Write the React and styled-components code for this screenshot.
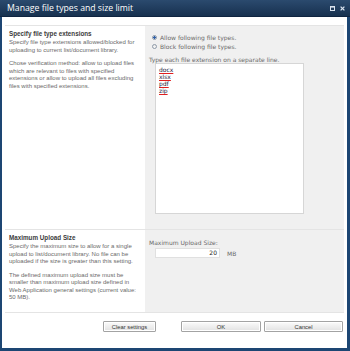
import React from 'react';
import styled, { createGlobalStyle } from 'styled-components';

const GlobalStyle = createGlobalStyle`
  html, body {
    margin: 0;
    padding: 0;
    background: #fff;
  }
`;

const Dialog = styled.div`
  width: 350px;
  height: 351px;
  box-sizing: border-box;
  display: flex;
  flex-direction: column;
  background: #1d4673;
  padding: 0 3px 3px 2px;
  font-family: "Liberation Sans", Arial, sans-serif;
`;

const TitleBar = styled.div`
  height: 17px;
  margin: 0 -3px 0 -2px;
  padding: 0 5px 0 7px;
  display: flex;
  align-items: center;
  background: linear-gradient(#2b4a6e, #17314f);
  border-bottom: 1px solid #0f2440;
  box-sizing: border-box;
`;

const Title = styled.div`
  flex: 1;
  color: #fff;
  font-family: "Open Sans", "Noto Sans", sans-serif;
  font-size: 8.7px;
`;

const TitleIcons = styled.div`
  display: flex;
  gap: 5px;
  align-items: center;
`;

const Body = styled.div`
  flex: 1;
  background: #fff;
  padding: 8px 3px 0 3px;
  display: flex;
  flex-direction: column;
`;

const Section = styled.div`
  display: grid;
  grid-template-columns: 140px 1fr;
  height: ${p => p.h}px;
  border-top: 1px solid #e4e4e4;
  border-bottom: ${p => (p.last ? '1px solid #e4e4e4' : 'none')};
`;

const Info = styled.div`
  padding: 4px 3px 0 4px;
`;

const InfoTitle = styled.div`
  font-size: 6.3px;
  font-weight: bold;
  color: #3b3b3b;
  line-height: 7px;
  margin-bottom: 2px;
`;

const InfoText = styled.p`
  margin: 0 0 6px 0;
  font-size: 6px;
  line-height: 7.5px;
  color: #6a6a6a;
`;

const Field = styled.div`
  background: #f0f0f0;
  padding: 7px 4px 0 4px;
  font-family: "DejaVu Sans", Verdana, sans-serif;
`;

const RadioRow = styled.label`
  display: flex;
  align-items: center;
  gap: 3px;
  padding-left: 3px;
  height: 9px;
  font-size: 6px;
  color: #6a6a6a;
`;

const Radio = styled.span`
  width: 5px;
  height: 5px;
  border-radius: 50%;
  box-sizing: border-box;
  border: 1px solid #8e9aa8;
  background: ${p => (p.on ? 'radial-gradient(circle, #2f5fa8 0 1.2px, #dfe7f2 1.4px)' : 'linear-gradient(#e8e8e8, #fafafa)')};
`;

const FieldLabel = styled.div`
  font-size: 6px;
  color: #6a6a6a;
  margin-top: ${p => p.mt || 0}px;
  line-height: 7px;
`;

const ListBox = styled.div`
  width: 149px;
  height: 151px;
  box-sizing: border-box;
  margin: 0 0 0 6px;
  background: #fff;
  border: 1px solid #d6d6d6;
  padding: 2px 3px;
  display: flex;
  flex-direction: column;
  align-items: flex-start;
`;

const Ext = styled.span`
  font-size: 6px;
  line-height: 7px;
  color: #1c1c3c;
  text-decoration: underline solid #e02020;
  text-decoration-thickness: 0.7px;
  text-underline-offset: 1px;
`;

const SizeRow = styled.div`
  display: flex;
  align-items: center;
  gap: 7px;
  margin: 2px 0 0 6px;
`;

const SizeInput = styled.div`
  width: 65px;
  height: 10px;
  box-sizing: border-box;
  background: #fff;
  border: 1px solid #e0e0e0;
  font-size: 6px;
  color: #222;
  text-align: right;
  padding-right: 2px;
  line-height: 8px;
`;

const Unit = styled.span`
  font-size: 6px;
  color: #6a6a6a;
`;

const ButtonBar = styled.div`
  display: flex;
  justify-content: flex-end;
  padding: 8px 1px 0 0;
`;

const Button = styled.button`
  width: ${p => p.w}px;
  height: 11px;
  margin-left: ${p => p.ml}px;
  padding: 0;
  box-sizing: border-box;
  border: 1px solid #a3a3a3;
  border-radius: 1px;
  background: linear-gradient(#fbfbfb, #e2e2e2);
  box-shadow: inset 0 0 0 1px #fff;
  font-family: "Liberation Sans", Arial, sans-serif;
  font-size: 5.8px;
  color: #333;
`;

function MaxIcon() {
  return (
    <svg width="5" height="5" viewBox="0 0 5 5">
      <rect x="0.5" y="0.5" width="4" height="4" fill="none" stroke="#d9e2ee" strokeWidth="1" />
      <rect x="0" y="0" width="5" height="1.6" fill="#d9e2ee" />
    </svg>
  );
}

function CloseIcon() {
  return (
    <svg width="5" height="5" viewBox="0 0 5 5">
      <path d="M0.6 0.6 L4.4 4.4 M4.4 0.6 L0.6 4.4" stroke="#d9e2ee" strokeWidth="1.3" />
    </svg>
  );
}

export default function App() {
  return (
    <>
      <GlobalStyle />
      <Dialog>
        <TitleBar>
          <Title>Manage file types and size limit</Title>
          <TitleIcons>
            <MaxIcon />
            <CloseIcon />
          </TitleIcons>
        </TitleBar>
        <Body>
          <Section h={203}>
            <Info>
              <InfoTitle>Specify file type extensions</InfoTitle>
              <InfoText>
                Specify file type extensions allowed/blocked for uploading to current list/document library.
              </InfoText>
              <InfoText>
                Chose verification method: allow to upload files which are relevant to files with specified
                extensions or allow to upload all files excluding files with specified extensions.
              </InfoText>
            </Info>
            <Field>
              <RadioRow>
                <Radio on />
                Allow following file types.
              </RadioRow>
              <RadioRow>
                <Radio />
                Block following file types.
              </RadioRow>
              <FieldLabel mt={5}>Type each file extension on a separate line.</FieldLabel>
              <ListBox>
                {['docx', 'xlsx', 'pdf', 'zip'].map(ext => (
                  <Ext key={ext}>{ext}</Ext>
                ))}
              </ListBox>
            </Field>
          </Section>
          <Section h={82} last>
            <Info>
              <InfoTitle>Maximum Upload Size</InfoTitle>
              <InfoText>
                Specify the maximum size to allow for a single upload to list/document library. No file can be
                uploaded if the size is greater than this setting.
              </InfoText>
              <InfoText>
                The defined maximum upload size must be smaller than maximum upload size defined in Web
                Application general settings (current value: 50 MB).
              </InfoText>
            </Info>
            <Field>
              <FieldLabel mt={2}>Maximum Upload Size:</FieldLabel>
              <SizeRow>
                <SizeInput>20</SizeInput>
                <Unit>MB</Unit>
              </SizeRow>
            </Field>
          </Section>
          <ButtonBar>
            <Button w={53} ml={0}>Clear settings</Button>
            <Button w={80} ml={25}>OK</Button>
            <Button w={79} ml={3}>Cancel</Button>
          </ButtonBar>
        </Body>
      </Dialog>
    </>
  );
}
